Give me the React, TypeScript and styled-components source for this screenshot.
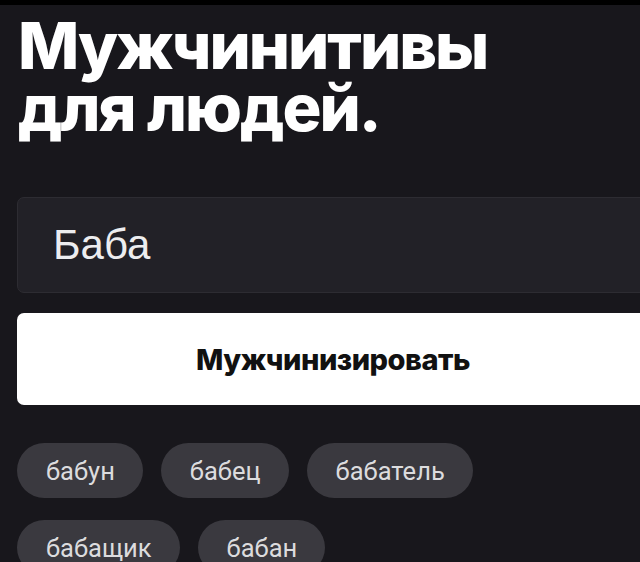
import React from 'react';
import styled, { createGlobalStyle } from 'styled-components';

const GlobalStyle = createGlobalStyle`
  html, body {
    margin: 0;
    padding: 0;
    background: #18171c;
  }
  * {
    box-sizing: border-box;
  }
`;

const Page = styled.div`
  min-height: 562px;
  border-top: 5px solid #000;
  padding: 10px 0 0 17px;
  overflow: hidden;
  background: #18171c;
`;

const Title = styled.h1`
  margin: 0 0 58px 1px;
  font-family: Inter, "Noto Sans", sans-serif;
  font-weight: 800;
  font-size: 65px;
  line-height: 62px;
  letter-spacing: -2px;
  color: #fff;
`;

const TitleLine = styled.span`
  display: block;
`;

const Field = styled.input`
  display: block;
  width: 632px;
  height: 96px;
  padding: 0 0 0 35px;
  margin: 0 0 20px;
  background: #222127;
  border: 1px solid #2d2c32;
  border-radius: 7px;
  font-family: "Liberation Sans", Arial, sans-serif;
  font-size: 42px;
  color: #ededef;
  outline: none;
`;

const Submit = styled.button`
  display: block;
  width: 632px;
  height: 92px;
  margin: 0 0 38px;
  background: #fff;
  border: none;
  border-radius: 7px;
  font-family: Inter, "Noto Sans", sans-serif;
  font-weight: 800;
  font-size: 29px;
  letter-spacing: -0.5px;
  color: #111;
  cursor: pointer;
`;

const Chips = styled.div`
  display: flex;
  flex-wrap: wrap;
  gap: 22px 18px;
  width: 520px;
`;

const Chip = styled.span`
  display: inline-flex;
  align-items: center;
  height: 55px;
  padding: 0 28px 0 29px;
  border-radius: 28px;
  background: #3a393f;
  font-family: Roboto, "Noto Sans", sans-serif;
  font-size: 25.5px;
  color: #dcdcde;
`;

const suggestions = ['бабун', 'бабец', 'бабатель', 'бабащик', 'бабан'];

export default function App() {
  return (
    <>
      <GlobalStyle />
      <Page>
        <Title>
          <TitleLine>Мужчинитивы</TitleLine>
          <TitleLine>для людей.</TitleLine>
        </Title>
        <Field defaultValue="Баба" />
        <Submit>Мужчинизировать</Submit>
        <Chips>
          {suggestions.map((s) => (
            <Chip key={s}>{s}</Chip>
          ))}
        </Chips>
      </Page>
    </>
  );
}
